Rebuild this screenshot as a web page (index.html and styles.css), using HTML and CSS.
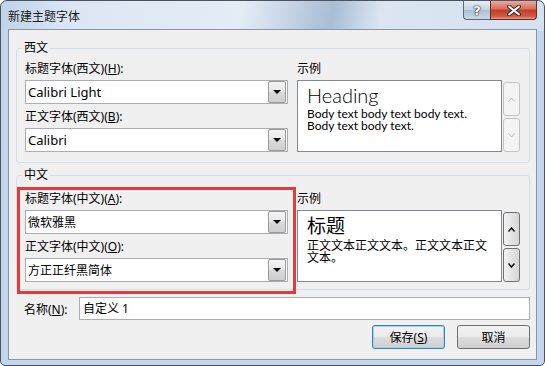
FILE: index.html
```html
<!DOCTYPE html>
<html>
<head>
    <meta charset="UTF-8">
    <title>新建主题字体</title>
    <link rel="stylesheet" href="styles.css">
</head>
<body>
    <div class="window">
        <div class="titlebar">
            <span class="title">新建主题字体</span>
            <div class="caption">
                <span class="cap-help">?</span>
                <span class="cap-close">
                    <svg width="14" height="11" viewBox="0 0 14 11">
                        <path d="M2 1.5 L12 9.5 M12 1.5 L2 9.5" stroke="#3b2a2a" stroke-width="4" stroke-linecap="round"/>
                        <path d="M2 1.5 L12 9.5 M12 1.5 L2 9.5" stroke="#fff" stroke-width="2" stroke-linecap="round"/>
                    </svg>
                </span>
            </div>
        </div>

        <div class="client">
            <!-- Latin fonts -->
            <fieldset class="group group-latin">
                <legend>西文</legend>
                <div class="cols">
                    <div class="col-left">
                        <label class="field-label">标题字体(西文)(<u>H</u>):</label>
                        <div class="combo"><span class="combo-text latin">Calibri Light</span><span class="drop"></span></div>
                        <label class="field-label next">正文字体(西文)(<u>B</u>):</label>
                        <div class="combo"><span class="combo-text latin">Calibri</span><span class="drop"></span></div>
                    </div>
                    <div class="col-right">
                        <label class="field-label">示例</label>
                        <div class="sample-row">
                            <div class="sample sample-latin">
                                <div class="sample-head">Heading</div>
                                <p class="sample-body">Body text body text body text. Body text body text.</p>
                            </div>
                            <div class="spin disabled">
                                <span class="spin-btn"><svg width="7" height="5" viewBox="0 0 7 5"><polyline points="0.5,4.5 3.5,1 6.5,4.5" fill="none" stroke="#b8b8b8" stroke-width="1"/></svg></span>
                                <span class="spin-btn"><svg width="7" height="5" viewBox="0 0 7 5"><polyline points="0.5,0.5 3.5,4 6.5,0.5" fill="none" stroke="#b8b8b8" stroke-width="1"/></svg></span>
                            </div>
                        </div>
                    </div>
                </div>
            </fieldset>

            <!-- East Asian fonts -->
            <fieldset class="group group-cjk">
                <legend>中文</legend>
                <div class="cols">
                    <div class="col-left marked">
                        <label class="field-label">标题字体(中文)(<u>A</u>):</label>
                        <div class="combo"><span class="combo-text">微软雅黑</span><span class="drop"></span></div>
                        <label class="field-label next">正文字体(中文)(<u>O</u>):</label>
                        <div class="combo"><span class="combo-text">方正正纤黑简体</span><span class="drop"></span></div>
                        <div class="mark"></div>
                    </div>
                    <div class="col-right">
                        <label class="field-label">示例</label>
                        <div class="sample-row">
                            <div class="sample sample-cjk">
                                <div class="sample-head">标题</div>
                                <p class="sample-body">正文文本正文文本。正文文本正文文本。</p>
                            </div>
                            <div class="spin">
                                <span class="spin-btn"><svg width="7" height="5" viewBox="0 0 7 5"><polyline points="0.5,4.5 3.5,1 6.5,4.5" fill="none" stroke="#000" stroke-width="1.4"/></svg></span>
                                <span class="spin-btn"><svg width="7" height="5" viewBox="0 0 7 5"><polyline points="0.5,0.5 3.5,4 6.5,0.5" fill="none" stroke="#000" stroke-width="1.4"/></svg></span>
                            </div>
                        </div>
                    </div>
                </div>
            </fieldset>

            <div class="name-row">
                <label class="name-label">名称(<u>N</u>):</label>
                <div class="name-input">自定义 1</div>
            </div>

            <div class="actions">
                <button class="btn default">保存(<u>S</u>)</button>
                <button class="btn">取消</button>
            </div>
        </div>
    </div>
</body>
</html>
```

FILE: styles.css
```css
body {
    margin: 0;
    background: #fff;
    font-family: "Noto Sans", "Noto Sans CJK SC", sans-serif;
    font-size: 12px;
    color: #000;
}

/* Window frame */
.window {
    width: 545px;
    height: 366px;
    box-sizing: border-box;
    border: 1px solid #4a5361;
    border-radius: 7px 7px 5px 5px;
    display: flex;
    flex-direction: column;
    background:
        linear-gradient(to bottom, rgba(255,255,255,0) 0, rgba(255,255,255,0) 30px, #c4d6eb 30px),
        linear-gradient(100deg, #bfd2e8 0%, #dce7f3 12%, #e4ecf6 40%, #a9bdd5 55%, #dbe6f2 63%, #d2dfee 100%);
    overflow: hidden;
}

.titlebar {
    height: 28px;
    flex: none;
    display: flex;
    justify-content: space-between;
    padding: 0 7px;
}

.title {
    line-height: 29px;
    font-family: "Noto Sans CJK SC", sans-serif;
    color: #1a1a1a;
}

.caption {
    display: flex;
    align-self: flex-start;
}

.cap-help,
.cap-close {
    height: 19px;
    display: flex;
    align-items: center;
    justify-content: center;
    box-sizing: border-box;
    border: 1px solid #5a6878;
    border-top: none;
}

.cap-help {
    width: 27px;
    border-right: none;
    border-radius: 0 0 0 4px;
    background: linear-gradient(#e6edf5, #c3d2e2 50%, #aebfd3 51%, #cbd8e6);
    color: #fff;
    font-family: "DejaVu Sans", sans-serif;
    font-weight: bold;
    font-size: 13px;
    text-shadow: 0 0 1px #2f3b4a, 0 0 1px #2f3b4a, 0 0 2px #2f3b4a;
}

.cap-close {
    width: 47px;
    border-color: #5d2f2a;
    border-radius: 0 0 4px 0;
    background: linear-gradient(#e9a99c, #d66c5b 45%, #c23b2a 50%, #d15a45 85%, #e79a88);
}

/* Client area */
.client {
    flex: 1;
    margin: 0 7px 5px;
    border: 1px solid #8796aa;
    background: #f0f0f0;
    padding: 0 6px 0 7px;
}

.group {
    margin: 10px 0 0;
    border: 1px solid #d5dfe5;
    border-radius: 3px;
    padding: 5px 9px 10px 8px;
    min-width: 0;
}

.group-cjk {
    margin-top: 4px;
    padding-top: 8px;
    padding-bottom: 7px;
}

.group legend {
    padding: 0 2px;
    margin-left: -3px;
    line-height: 16px;
}

.cols {
    display: flex;
    gap: 9px;
}

.col-left {
    width: 263px;
    display: flex;
    flex-direction: column;
}

.col-right {
    width: 223px;
    display: flex;
    flex-direction: column;
}

.field-label {
    display: block;
    line-height: 16px;
    margin-bottom: 3px;
    white-space: nowrap;
}

.field-label.next {
    margin-top: 5px;
}

/* Combo box */
.combo {
    height: 24px;
    box-sizing: border-box;
    border: 1px solid #abadb3;
    background: #fff;
    display: flex;
    align-items: center;
    justify-content: space-between;
    padding: 0 1px 0 1px;
}

.combo-text {
    padding-left: 1px;
}

.combo-text.latin {
    font-size: 13px;
}

.drop {
    width: 18px;
    height: 22px;
    box-sizing: border-box;
    border: 1px solid #9a9a9a;
    border-radius: 2px;
    background: linear-gradient(#f4f4f4, #e8e8e8 50%, #d9d9d9 51%, #cfcfcf);
    position: relative;
}

.drop::after {
    content: "";
    position: absolute;
    left: 4px;
    top: 8px;
    border-left: 4px solid transparent;
    border-right: 4px solid transparent;
    border-top: 4px solid #000;
}

/* Sample preview */
.sample-row {
    display: flex;
}

.sample {
    width: 205px;
    height: 72px;
    box-sizing: border-box;
    border: 1px solid #828790;
    background: #fff;
    padding: 1px 12px 0 9px;
    overflow: hidden;
}

.sample-head {
    font-size: 20px;
    line-height: 26px;
}

.sample-latin .sample-head {
    font-family: "Lato", sans-serif;
    font-weight: 300;
}

.sample-latin .sample-body {
    font-family: "Lato", sans-serif;
    font-size: 12px;
}

.sample-cjk {
    padding-top: 0;
}

.sample-cjk .sample-head {
    font-family: "Noto Sans CJK SC", sans-serif;
    font-size: 19px;
    line-height: 28px;
}

.sample-body {
    margin: 0;
    line-height: 12px;
    font-family: "Noto Sans CJK SC", sans-serif;
}

.spin {
    width: 17px;
    margin-left: 1px;
    padding-top: 2px;
    display: flex;
    flex-direction: column;
    gap: 2px;
}

.spin-btn {
    height: 34px;
    box-sizing: border-box;
    border: 1px solid #707070;
    border-radius: 3px;
    background: linear-gradient(to right, #f2f2f2, #e4e4e4 50%, #d6d6d6);
    display: flex;
    align-items: center;
    justify-content: center;
}

.spin.disabled .spin-btn {
    border-color: #c4c4c4;
    background: #f4f4f4;
}

/* Red annotation frame over the East Asian font fields */
.marked {
    position: relative;
}

.mark {
    position: absolute;
    top: -4px;
    right: -8px;
    bottom: -12px;
    left: -8px;
    border: 3px solid #e23b3b;
    pointer-events: none;
}

/* Name row */
.name-row {
    display: flex;
    align-items: center;
    margin-top: 7px;
    padding-left: 8px;
}

.name-label {
    width: 55px;
    flex: none;
}

.name-input {
    flex: 1;
    height: 23px;
    box-sizing: border-box;
    border: 1px solid #abadb3;
    background: #fff;
    line-height: 21px;
    padding-left: 3px;
}

/* Buttons */
.actions {
    display: flex;
    justify-content: flex-end;
    gap: 12px;
    margin-top: 5px;
}

.btn {
    width: 73px;
    height: 24px;
    border: 1px solid #707070;
    border-radius: 3px;
    background: linear-gradient(#f2f2f2, #ebebeb 50%, #dddddd 51%, #cfcfcf);
    font-family: "Noto Sans", "Noto Sans CJK SC", sans-serif;
    font-size: 12px;
    color: #000;
    padding: 0;
}

.btn.default {
    border-color: #3c7fb1;
    box-shadow: inset 0 0 0 1px #9fd5f2;
}
```
